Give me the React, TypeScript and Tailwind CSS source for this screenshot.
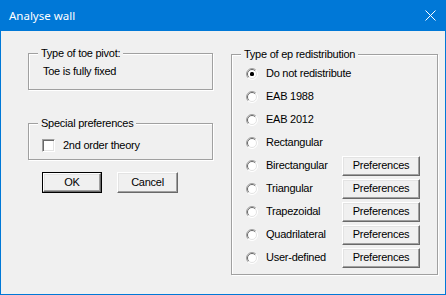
import React from 'react';

const font = { fontFamily: '"Liberation Sans", Arial, sans-serif' };

function GroupBox({ label, className, children }: { label: string; className: string; children?: React.ReactNode }) {
  return (
    <div
      className={`relative border border-[#a0a0a0] shadow-[inset_1px_1px_0_#ffffff,1px_1px_0_#ffffff] ${className}`}
    >
      <span className="absolute -top-[7px] left-[9px] bg-[#f0f0f0] px-[3px] leading-[13px]">{label}</span>
      {children}
    </div>
  );
}

function Button({ label, className = '', isDefault = false }: { label: string; className?: string; isDefault?: boolean }) {
  const inner = (
    <div className="flex h-full w-full items-center justify-center border border-t-white border-l-white border-r-[#696969] border-b-[#696969] bg-[#f0f0f0] shadow-[inset_-1px_-1px_0_#a0a0a0,inset_1px_1px_0_#e3e3e3] leading-[13px]">
      {label}
    </div>
  );
  if (isDefault) {
    return <div className={`border border-black ${className}`}>{inner}</div>;
  }
  return <div className={className}>{inner}</div>;
}

function Radio({ checked = false }: { checked?: boolean }) {
  return (
    <svg width="12" height="12" viewBox="0 0 12 12" className="shrink-0">
      <circle cx="6" cy="6" r="5.5" fill="#ffffff" />
      <path d="M2.1 9.9 A5.5 5.5 0 0 1 9.9 2.1" stroke="#a0a0a0" strokeWidth="1" fill="none" />
      <path d="M2.8 9.2 A4.5 4.5 0 0 1 9.2 2.8" stroke="#696969" strokeWidth="1" fill="none" />
      <path d="M9.9 2.1 A5.5 5.5 0 0 1 2.1 9.9" stroke="#ffffff" strokeWidth="1" fill="none" />
      <path d="M9.2 2.8 A4.5 4.5 0 0 1 2.8 9.2" stroke="#e3e3e3" strokeWidth="1" fill="none" />
      {checked && <rect x="4" y="4" width="4" height="4" rx="1.5" fill="#000" />}
    </svg>
  );
}

const options: { label: string; checked?: boolean; prefs?: boolean }[] = [
  { label: 'Do not redistribute', checked: true },
  { label: 'EAB 1988' },
  { label: 'EAB 2012' },
  { label: 'Rectangular' },
  { label: 'Birectangular', prefs: true },
  { label: 'Triangular', prefs: true },
  { label: 'Trapezoidal', prefs: true },
  { label: 'Quadrilateral', prefs: true },
  { label: 'User-defined', prefs: true },
];

export default function App() {
  return (
    <div
      className="flex h-[295px] w-[446px] flex-col border-x border-b border-[#0078d7] bg-[#f0f0f0] text-[11px] tracking-[-0.25px] text-black"
      style={font}
    >
      {/* Title bar */}
      <div className="flex h-[31px] shrink-0 items-center justify-between bg-[#0078d7] pl-[8px] pr-[9px] text-white">
        <span className="text-[11.5px] tracking-normal" style={{ fontFamily: '"Noto Sans", sans-serif' }}>
          Analyse wall
        </span>
        <svg width="11" height="11" viewBox="0 0 11 11">
          <path d="M0.5 0.5 L10.5 10.5 M10.5 0.5 L0.5 10.5" stroke="#ffffff" strokeWidth="1" />
        </svg>
      </div>

      {/* Body */}
      <div className="flex pl-[27px] pt-[22px]">
        {/* Left column */}
        <div className="flex w-[185px] flex-col">
          <GroupBox label="Type of toe pivot:" className="h-[37px] pl-[14px] pt-[11px]">
            <div className="leading-[13px]">Toe is fully fixed</div>
          </GroupBox>

          <GroupBox label="Special preferences" className="mt-[33px] h-[37px] pl-[13px] pt-[15px]">
            <div className="flex items-center leading-[13px]">
              <div className="h-[13px] w-[13px] border border-t-[#a0a0a0] border-l-[#a0a0a0] border-r-white border-b-white bg-white shadow-[inset_1px_1px_0_#696969,inset_-1px_-1px_0_#e3e3e3]" />
              <span className="ml-[8px]">2nd order theory</span>
            </div>
          </GroupBox>

          <div className="mt-[12px] flex pl-[14px]">
            <Button label="OK" isDefault className="h-[21px] w-[60px]" />
            <Button label="Cancel" className="ml-[15px] h-[21px] w-[61px]" />
          </div>
        </div>

        {/* Right column */}
        <GroupBox label="Type of ep redistribution" className="ml-[18px] mt-[1px] h-[221px] w-[207px] pt-[7px]">
          {options.map((o) => (
            <div key={o.label} className="flex h-[23px] items-center pl-[14px]">
              <Radio checked={o.checked} />
              <span className="ml-[8px] w-[76px] shrink-0 whitespace-nowrap leading-[13px]">{o.label}</span>
              {o.prefs && <Button label="Preferences" className="h-[20px] w-[78px]" />}
            </div>
          ))}
        </GroupBox>
      </div>
    </div>
  );
}
